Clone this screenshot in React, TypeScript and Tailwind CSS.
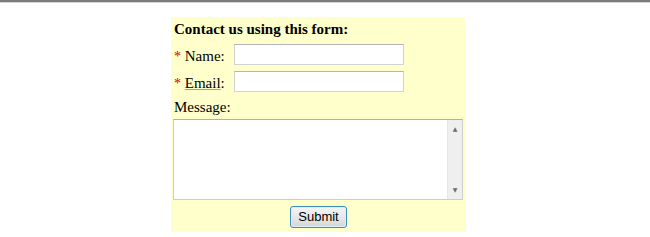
export default function App() {
  return (
    <div className="min-h-[237px] w-[650px] bg-white font-['Liberation_Serif',serif] text-[15px] leading-[18px] text-black">
      {/* top window edge */}
      <div className="h-[2px] bg-[#7c7c7c]" />
      <div className="h-px bg-[#d6d6d6]" />

      {/* Contact form */}
      <form className="ml-[171px] mt-[14px] flex h-[215px] w-[295px] flex-col bg-[#ffffcc] pl-[2px] pr-[3px] pt-[3px]">
        <h2 className="pl-px font-bold">Contact us using this form:</h2>

        <div className="mt-[6px] flex items-start">
          <label className="mt-[3px] h-[18px] w-[61px] pl-px">
            <span className="text-[14px] leading-none text-[#d40000]">*</span> Name:
          </label>
          <input
            type="text"
            className="h-[21px] w-[170px] border border-[#d2d2d2] border-t-[#b4b4b4] bg-white"
          />
        </div>

        <div className="mt-[6px] flex items-start">
          <label className="mt-[3px] h-[18px] w-[61px] pl-px">
            <span className="text-[14px] leading-none text-[#d40000]">*</span>{" "}
            <span className="underline decoration-[#a0a0a0] underline-offset-1">Email</span>:
          </label>
          <input
            type="text"
            className="h-[21px] w-[170px] border border-[#d2d2d2] border-t-[#b4b4b4] bg-white"
          />
        </div>

        <label className="mt-[6px] pl-px">Message:</label>

        <div className="mt-[3px] flex h-[81px] w-[290px] border border-[#cdcdcd] border-t-[#b0b0b0] bg-white">
          <textarea className="flex-1 resize-none bg-white outline-none" />
          <div className="flex w-[15px] flex-col items-center justify-between border-l border-[#e6e6e6] bg-[#efefef] py-[5px] font-['DejaVu_Sans',sans-serif] text-[6px] leading-[8px] text-[#6b6b6b]">
            <span>▲</span>
            <span>▼</span>
          </div>
        </div>

        <div className="mt-[6px] flex justify-center pl-px">
          <button
            type="button"
            className="h-[22px] w-[57px] rounded-[3px] border border-[#3c8fbd] bg-gradient-to-b from-[#f4f4f4] via-[#e8e8e8] to-[#d6d6d6] font-['Liberation_Sans',Arial,sans-serif] text-[13px] leading-[18px] text-black shadow-[inset_0_0_0_1px_#d8f0fb]"
          >
            Submit
          </button>
        </div>
      </form>
    </div>
  );
}
